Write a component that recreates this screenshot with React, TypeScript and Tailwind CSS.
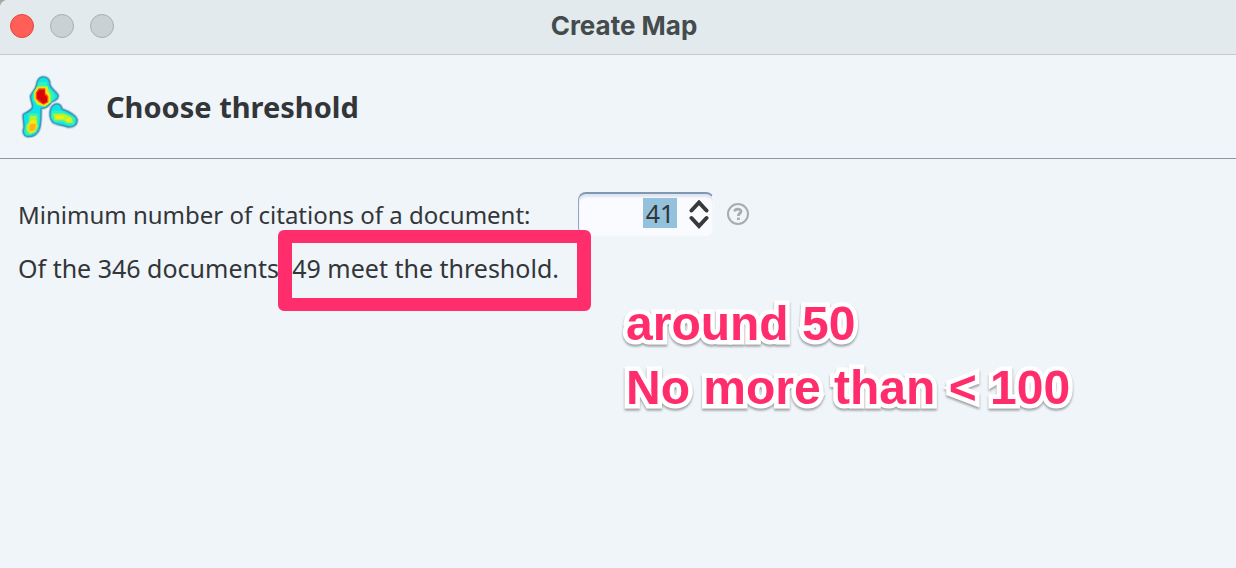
import { useState } from "react";

const BLOB =
  "M98 34 C108 33 118 40 117 54 C119 68 136 76 142 88 C142 100 128 101 122 106 C114 119 102 124 91 124 C91 142 91 166 87 184 C82 202 68 210 52 208 C42 206 40 196 44 184 C46 170 40 156 42 146 C48 140 64 138 70 124 C72 114 64 102 64 90 C68 78 78 74 82 56 C84 42 90 35 98 34 Z";
const ARM =
  "M132 118 C142 112 152 116 154 130 C168 135 194 146 199 160 C199 174 188 181 174 180 C162 172 142 175 130 166 C121 156 120 138 126 125 Z";

function DensityLogo() {
  return (
    <svg viewBox="24 20 192 204" className="h-[68px] w-16 shrink-0" aria-hidden="true">
      <g strokeLinejoin="round">
        <path d={BLOB} fill="#0bd9e8" stroke="#b9d6e2" strokeWidth="15" />
        <path d={ARM} fill="#0bd9e8" stroke="#b9d6e2" strokeWidth="15" />
        <path d={BLOB} fill="#0bd9e8" stroke="#4594b0" strokeWidth="9" />
        <path d={ARM} fill="#0bd9e8" stroke="#4594b0" strokeWidth="9" />
        <path d={BLOB} fill="#0be4ee" />
        <path d={ARM} fill="#0be4ee" />
      </g>
      {/* density bands, coolest first */}
      <g fill="#35f3b0" stroke="#35f3b0" strokeWidth="6" strokeLinejoin="round">
        <path d="M90 50 H108 V62 L122 74 L132 90 L122 106 L100 118 L82 114 L72 98 V80 L84 64 Z" />
        <path d="M58 144 H83 V176 L76 194 L60 202 H49 V180 L56 166 Z" />
        <path d="M130 136 H148 L166 143 L192 156 L190 172 H172 L156 164 L136 164 L126 152 Z" />
      </g>
      <g fill="#b4f52e">
        <path d="M82 60 H114 V69 L122 84 V108 L106 121 L82 115 L72 99 V76 Z" />
        <path d="M60 148 H80 V168 L84 180 L76 196 L60 204 L50 192 V178 L58 168 Z" />
        <path d="M130 142 H162 L185 153 L189 170 H173 L160 162 H134 Z" />
      </g>
      <g fill="#ffe612">
        <path d="M84 64 H111 V75 L119 87 V108 L104 118 L84 112 L75 98 V77 Z" />
        <path d="M61 162 H79 V186 L72 197 H56 V177 Z" />
        <path d="M138 148 H161 V157 H138 Z M169 156 H182 V165 H169 Z" />
      </g>
      <path fill="#ffb31a" d="M62 172 H77 V188 L69 194 H58 V179 Z" />
      <path fill="#ff4a08" d="M86 66 H106 V80 L115 90 V108 L101 115 L86 107 L77 97 V79 Z" />
      <path fill="#d90808" d="M88 70 H104 V86 L111 92 V106 L99 112 L90 103 L81 96 V80 Z" />
    </svg>
  );
}

function TitleBar() {
  return (
    <header className="grid h-[55px] grid-cols-[1fr_auto_1fr] items-center rounded-tl-lg border-b border-[#c6cbcf] bg-[#e2eaed] px-[10px] pb-[3px]">
      <div className="flex gap-4">
        <button aria-label="Close" className="size-6 rounded-full border border-[#e2463f] bg-[#ff5f57]" />
        <button aria-label="Minimize" className="size-6 rounded-full border border-[#a8b0b3] bg-[#c9d1d4]" />
        <button aria-label="Zoom" className="size-6 rounded-full border border-[#a8b0b3] bg-[#c9d1d4]" />
      </div>
      <h1 className="pl-3 font-[Inter,sans-serif] text-[26px] leading-8 font-bold text-[#454b4d]">Create Map</h1>
    </header>
  );
}

function Spinner() {
  const [value, setValue] = useState("41");
  const step = (by: number) => setValue(String(Math.max(0, Number(value) + by)));

  return (
    <div className="flex h-11 w-[136px] items-center justify-end rounded-lg border border-t-2 border-[#f6f9fd] border-t-[#7f97b3] border-l-[#93a8c0] bg-[#fafbff] pr-1 shadow-[inset_0_3px_2px_#dfe5ef]">
      <input
        id="citations"
        type="text"
        inputMode="numeric"
        value={value}
        onChange={(e) => setValue(e.target.value)}
        className="mb-1 h-[30px] w-[34px] bg-[#94c2dc] text-center text-[25px] leading-[30px] outline-none"
      />
      <div className="ml-3 flex flex-col">
        <button aria-label="Increase" onClick={() => step(1)}>
          <svg viewBox="0 0 20 15" className="h-[15px] w-5" fill="none" stroke="#37393b" strokeWidth="4">
            <path d="M2.5 10.5 L10 2.5 L17.5 10.5" strokeLinecap="round" />
          </svg>
        </button>
        <button aria-label="Decrease" onClick={() => step(-1)}>
          <svg viewBox="0 0 20 15" className="h-[15px] w-5" fill="none" stroke="#37393b" strokeWidth="4">
            <path d="M2.5 3 L10 11 L17.5 3" strokeLinecap="round" />
          </svg>
        </button>
      </div>
    </div>
  );
}

export default function App() {
  return (
    <div className="bg-[#a9a79f]">
      <div className="flex min-h-screen flex-col rounded-tl-lg bg-[#f0f5fa] font-['Noto_Sans',sans-serif] text-2xl text-[#333638]">
        <TitleBar />

        <div className="flex h-[104px] items-center gap-6 border-b border-[#8f969d] pl-[18px]">
          <DensityLogo />
          <h2 className="text-[29px] leading-9 font-bold">Choose threshold</h2>
        </div>

        <main className="relative flex-1 px-[18px] pt-[33px]">
          <div className="flex items-center">
            <label htmlFor="citations" className="w-[560px] pt-px whitespace-nowrap">
              Minimum number of citations of a document:
            </label>
            <Spinner />
            <button aria-label="Help" className="ml-3">
              <svg viewBox="0 0 24 24" className="size-6" fill="none" stroke="#a9abad" strokeWidth="2">
                <circle cx="12" cy="12" r="10" />
                <path d="M8.8 9.4 C8.8 6.4 15 6.4 15 9.2 C15 11.6 12.4 11.2 12.4 14" strokeWidth="2.8" />
                <path d="M12.4 15.6 V18" strokeWidth="2.8" />
              </svg>
            </button>
          </div>

          <p className="mt-4 text-[25px] leading-8 whitespace-nowrap">
            Of the 346 documents,{" "}
            <span className="relative inline-block">
              49 meet the threshold.
              <span className="pointer-events-none absolute -top-[22px] -right-8 -bottom-[27px] -left-[14px] rounded-md border-[14px] border-y-[13px] border-[#ff2d6b]" />
            </span>
          </p>

          {/* note laid over the dialog */}
          <p className="absolute top-[133px] left-[626px] font-['Liberation_Sans',sans-serif] text-5xl leading-[64px] font-bold whitespace-nowrap text-[#ff2d6b] drop-shadow-[0_2px_1px_rgba(0,0,0,0.35)] [-webkit-text-stroke:9px_white] [paint-order:stroke_fill] [stroke-linejoin:round]">
            around 50
            <br />
            No more than &lt; 100
          </p>
        </main>
      </div>
    </div>
  );
}
